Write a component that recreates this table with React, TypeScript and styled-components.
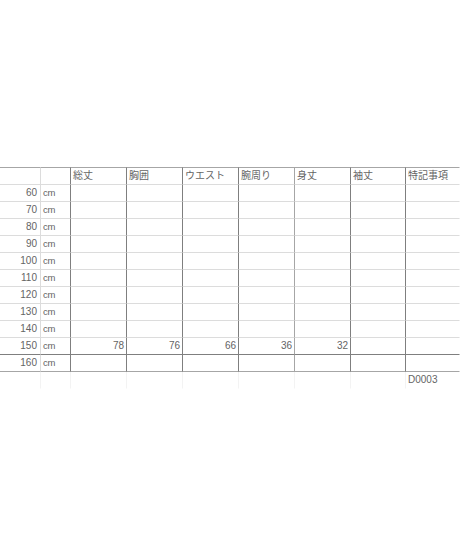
import React from "react";
import styled, { createGlobalStyle } from "styled-components";

const GlobalStyle = createGlobalStyle`
  html, body {
    margin: 0;
    padding: 0;
    background: #ffffff;
  }
  body {
    font-family: "Liberation Sans", "Noto Sans CJK JP", sans-serif;
  }
`;

const DARK = "#7f7f7f";
const MID = "#a6a6a6";
const LIGHT = "#dcdcdc";
const FAINT = "#f3f3f3";

// right border colour of each column, left to right
const colLines = [LIGHT, DARK, DARK, DARK, DARK, MID, DARK, DARK, "transparent"];

const headers = ["総丈", "胸囲", "ウエスト", "腕周り", "身丈", "袖丈", "特記事項"];
const sizes = [60, 70, 80, 90, 100, 110, 120, 130, 140, 150, 160];
const values: Record<number, (number | null)[]> = {
  150: [78, 76, 66, 36, 32, null, null],
};

const Page = styled.div`
  padding-top: 167px;
`;

const Grid = styled.div`
  display: grid;
  grid-template-columns: 41px 30px 56px 56px 56px 56px 56px 55px 1fr;
`;

const Cell = styled.div<{
  $line: string;
  $bottom: string;
  $top?: string;
  $align?: "left" | "right";
  $header?: boolean;
}>`
  box-sizing: border-box;
  height: ${(p) => (p.$header ? "18px" : "17px")};
  border-right: 1px solid ${(p) => p.$line};
  border-bottom: 1px solid ${(p) => p.$bottom};
  border-top: ${(p) => (p.$top ? `1px solid ${p.$top}` : "none")};
  padding: 0 2px 0 2px;
  font-size: 10px;
  line-height: 16px;
  color: #646464;
  text-align: ${(p) => p.$align || "left"};
  white-space: nowrap;
  overflow: hidden;
`;

const SizeCell = styled(Cell)`
  padding-right: 3px;
`;

const UnitCell = styled(Cell)`
  padding-left: 2px;
  font-size: 9.5px;
  letter-spacing: -0.3px;
`;

export default function App() {
  return (
    <>
      <GlobalStyle />
      <Page>
        <Grid>
          {colLines.map((line, i) => (
            <Cell key={`h${i}`} $header $line={line} $bottom={LIGHT} $top={MID}>
              {i >= 2 ? headers[i - 2] : ""}
            </Cell>
          ))}

          {sizes.map((size) => {
            const bottom = size === 150 ? DARK : size === 160 ? MID : LIGHT;
            const row = values[size] || [];
            return (
              <React.Fragment key={size}>
                <SizeCell $line={colLines[0]} $bottom={bottom} $align="right">
                  {size}
                </SizeCell>
                <UnitCell $line={colLines[1]} $bottom={bottom}>
                  cm
                </UnitCell>
                {headers.map((_, j) => (
                  <Cell
                    key={j}
                    $line={colLines[j + 2]}
                    $bottom={bottom}
                    $align="right"
                  >
                    {row[j] ?? ""}
                  </Cell>
                ))}
              </React.Fragment>
            );
          })}

          {colLines.map((_, i) => (
            <Cell key={`f${i}`} $line={i < 8 ? FAINT : "transparent"} $bottom="transparent">
              {i === 8 ? "D0003" : ""}
            </Cell>
          ))}
        </Grid>
      </Page>
    </>
  );
}
